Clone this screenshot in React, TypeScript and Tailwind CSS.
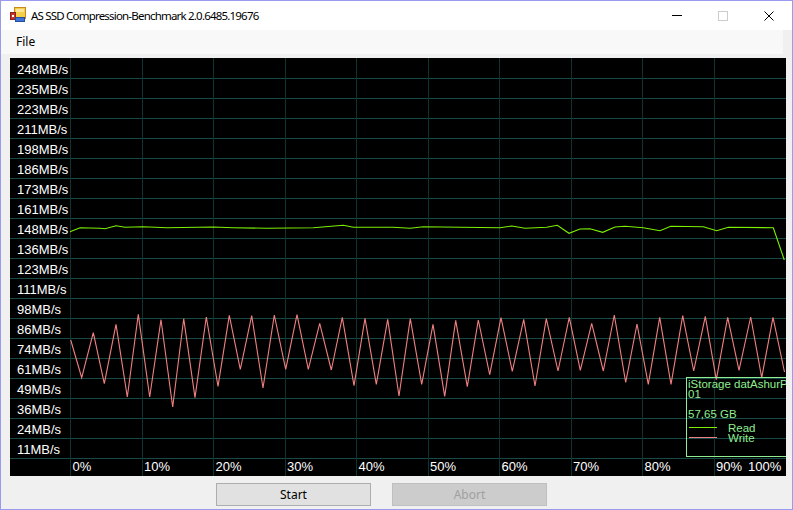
import React from "react";

const labels = ["248","235","223","211","198","186","173","161","148","136","123","111","98","86","74","61","49","36","24","11"];

const pink = "70.7,340 81.7,377.7 93.3,332.7 104.3,383.7 116,324.3 127.3,397 138.3,314.3 149.7,397 161,319.7 172.7,407 183.7,318.7 195,397.7 206.3,317 218,386.3 229.3,315.3 240.3,369.3 251.7,315.7 263,388 274.3,315 285.7,369.3 297,314.7 308.3,369.3 319.7,323.3 331.3,370 342.3,317.3 354,385.7 365,318.3 376.3,384.3 387.7,319.3 399,396 410.3,318.7 421.7,384.3 433,324.3 444.7,396.3 455.7,320.3 467.3,386.7 478.3,320 489.7,374.7 501,317.7 512.3,371.3 523.7,319.3 535,386 546.3,318.7 558,371 569.3,317.3 580.3,370.3 591.7,323.3 603.3,371 614.3,315 625.7,382.3 637,324 648.3,384.3 659.7,317.3 671,384.3 682.7,315.7 693.7,371 705.3,316.3 716.3,379.7 727.7,317.3 739,370.3 750.7,317 761.7,377.7 773,317.3 784.5,372";

const green = "70,231.7 80,227.7 100,228.3 105,228.7 116,225.7 125,227.3 143.3,226.7 166.7,227.7 213.3,227 233,227.7 266.7,228.3 313.3,227.7 343.3,225.3 353.3,227.3 393.3,227.3 410,228.3 423.3,226.7 460,227.3 500,227.7 511.7,226 525,228.3 546.7,227.3 557.3,225.3 569,233.3 580,229 590,228.7 602.7,232.3 615,227 625,226.3 643.3,227.7 660,230.7 670.7,226.3 703.3,226.7 716.7,230.7 728.3,227.3 773.3,227.7 784.3,260";

function Chart() {
  const hLines = Array.from({ length: 20 }, (_, i) => 78 + i * 20);
  const vLines = Array.from({ length: 10 }, (_, k) => Math.round(70 + 71.5 * k));
  const pct = ["0%", "10%", "20%", "30%", "40%", "50%", "60%", "70%", "80%"];
  return (
    <div className="relative ml-[9px] mt-[4px] h-[418px] w-[776px] overflow-hidden bg-black" style={{ fontFamily: '"Liberation Sans", Arial, sans-serif' }}>
      <svg className="absolute left-0 top-0" width={776} height={418}>
        <g transform="translate(-10,-58)">
          {hLines.map((y) => (
            <line key={"h" + y} x1={10} x2={786} y1={y + 0.5} y2={y + 0.5} stroke="#154a47" strokeWidth={1} />
          ))}
          {vLines.map((x) => (
            <line key={"v" + x} x1={x + 0.5} x2={x + 0.5} y1={58} y2={476} stroke="#0e3432" strokeWidth={1} />
          ))}
          <polyline points={green} fill="none" stroke="#7cf000" strokeWidth={1.1} />
          <polyline points={pink} fill="none" stroke="#f08080" strokeWidth={1.1} />
        </g>
      </svg>
      <div className="relative flex flex-col">
        {labels.map((l) => (
          <div key={l} className="h-[20px] pl-[7px] pt-[4px] text-[13px] leading-[16px] text-white">
            {l}MB/s
          </div>
        ))}
        <div className="flex h-[18px] text-[13px] leading-[18px] text-white">
          <div className="w-[60px]" />
          {pct.map((p) => (
            <div key={p} className="w-[71.5px] shrink-0 pl-[2.5px]">{p}</div>
          ))}
          <div className="flex w-[72px] shrink-0 pl-[2.5px]">
            <span>90%</span>
            <span className="ml-[6px]">100%</span>
          </div>
        </div>
      </div>
      <div className="absolute left-[676px] top-[319px] h-[80px] w-[100px] overflow-hidden border-y border-l border-[#90ee90] pl-[1px] pt-[1px] text-[11.5px] leading-[10px] text-[#90ee90]">
        <div className="whitespace-nowrap">iStorage datAshurP</div>
        <div>01</div>
        <div className="h-[10px]" />
        <div>57,65 GB</div>
        <div className="mt-[4px] flex h-[10px] items-start">
          <div className="mt-[4px] ml-[1px] h-[1px] w-[28px] bg-[#7cf000]" />
          <span className="ml-[11px]">Read</span>
        </div>
        <div className="flex h-[10px] items-start">
          <div className="mt-[4px] ml-[1px] h-[1px] w-[28px] bg-[#f08080]" />
          <span className="ml-[11px]">Write</span>
        </div>
      </div>
    </div>
  );
}

function AppIcon() {
  return (
    <svg width={16} height={16} viewBox="0 0 16 16">
      <rect x={4.5} y={0.5} width={11} height={11} fill="#f6cf4a" stroke="#c98a1c" />
      <rect x={6} y={2} width={8} height={3} fill="#fbe59a" />
      <rect x={0.5} y={5.5} width={5} height={7} fill="#c8312a" stroke="#8f1f1a" />
      <rect x={2} y={8} width={2} height={2} fill="#ffffff" />
      <rect x={5.5} y={10.5} width={9} height={4} fill="#3b73d9" stroke="#234e9e" />
    </svg>
  );
}

export default function App() {
  return (
    <div className="flex h-[510px] w-[793px] flex-col overflow-hidden border border-[#9a9aee] bg-[#f0f0f0]" style={{ fontFamily: '"Noto Sans", "Open Sans", sans-serif' }}>
      <div className="flex h-[29px] shrink-0 items-center bg-white">
        <div className="ml-[9px] mt-[-1px]"><AppIcon /></div>
        <div className="ml-[5px] text-[11.5px] tracking-[-0.8px] text-black">AS SSD Compression-Benchmark 2.0.6485.19676</div>
        <div className="ml-auto flex h-full items-center">
          <div className="flex h-full w-[46px] items-center justify-center">
            <div className="h-[1px] w-[10px] bg-black" />
          </div>
          <div className="flex h-full w-[46px] items-center justify-center">
            <div className="h-[10px] w-[10px] border border-[#cccccc]" />
          </div>
          <div className="flex h-full w-[46px] items-center justify-center">
            <svg width={10} height={10} viewBox="0 0 10 10">
              <path d="M0.5 0.5 L9.5 9.5 M9.5 0.5 L0.5 9.5" stroke="#000" strokeWidth={1} fill="none" />
            </svg>
          </div>
        </div>
      </div>
      <div className="flex h-[24px] w-[782px] shrink-0 items-center bg-[#f8f8f8]">
        <span className="ml-[15px] text-[12px] text-black">File</span>
      </div>
      <Chart />
      <div className="mt-[7px] flex">
        <button className="ml-[215px] h-[23px] w-[155px] border border-[#adadad] bg-[#e1e1e1] text-[12px] text-black">Start</button>
        <button className="ml-[21px] h-[23px] w-[155px] border border-[#bfbfbf] bg-[#cccccc] text-[12px] text-[#a0a0a0]">Abort</button>
      </div>
    </div>
  );
}
